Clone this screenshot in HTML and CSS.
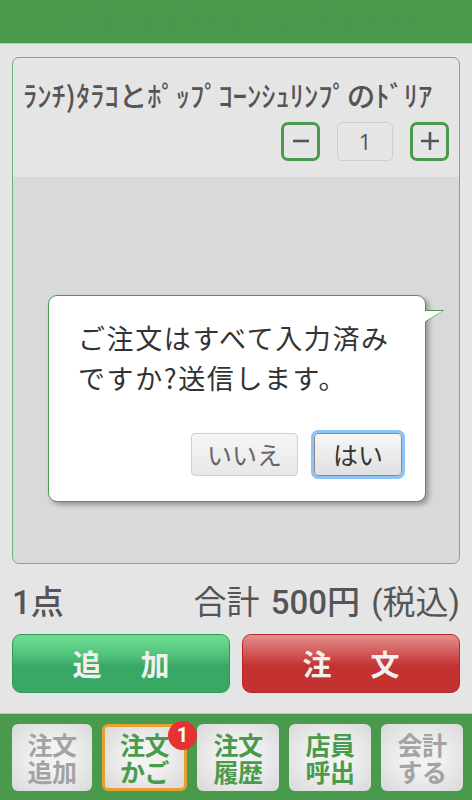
FILE: index.html
```html
<!DOCTYPE html>
<html lang="ja">
<head>
<meta charset="utf-8">
<link rel="stylesheet" href="styles.css">
</head>
<body>
<header class="topbar"><span class="topbar-title">ﾗﾝﾁ)ﾀﾗｺとﾎﾟｯﾌﾟｺｰﾝｼｭﾘﾝﾌﾟのﾄﾞﾘｱ</span></header>
<main class="content">
  <section class="card">
    <div class="card-head">
      <h1 class="item-name">ﾗﾝﾁ)ﾀﾗｺとﾎﾟｯﾌﾟｺｰﾝｼｭﾘﾝﾌﾟのﾄﾞﾘｱ</h1>
      <div class="stepper">
        <button class="step-btn"><svg viewBox="0 0 20 20" width="20" height="20"><path d="M2 10H18" stroke="#555" stroke-width="2.6"/></svg></button>
        <div class="qty">1</div>
        <button class="step-btn"><svg viewBox="0 0 20 20" width="20" height="20"><path d="M1 10H19M10 1V19" stroke="#555" stroke-width="2.6"/></svg></button>
      </div>
    </div>
    <div class="card-body"></div>
    <div class="dialog">
      <p class="dialog-msg">ご注文はすべて入力済み<br>ですか?送信します。</p>
      <div class="dialog-actions">
        <button class="dbtn">いいえ</button>
        <button class="dbtn dbtn-yes">はい</button>
      </div>
    </div>
  </section>
  <div class="totals">
    <span class="count">1点</span>
    <span class="sum">合計 <b>500円</b> (税込)</span>
  </div>
  <div class="actions">
    <button class="big big-green">追　加</button>
    <button class="big big-red">注　文</button>
  </div>
</main>
<footer class="tabbar">
  <div class="tab tab-off"><span class="tl">注文</span><span class="tl">追加</span></div>
  <div class="tab tab-on tab-sel"><span class="tl">注文</span><span class="tl">かご</span><span class="badge">1</span></div>
  <div class="tab tab-on"><span class="tl">注文</span><span class="tl">履歴</span></div>
  <div class="tab tab-on"><span class="tl">店員</span><span class="tl">呼出</span></div>
  <div class="tab tab-off"><span class="tl">会計</span><span class="tl">する</span></div>
</footer>
</body>
</html>
```
FILE: styles.css
```css
* { box-sizing: border-box; }
html, body { margin: 0; padding: 0; }
body {
  width: 472px;
  height: 800px;
  background: #e5e5e5;
  font-family: "Noto Sans CJK JP", "Noto Sans", sans-serif;
  color: #555;
  display: flex;
  flex-direction: column;
  overflow: hidden;
}
.topbar {
  height: 44px;
  background: #4a9a4e;
  border-bottom: 1px solid #b9d3b9;
  display: flex;
  align-items: center;
  justify-content: center;
}
.topbar-title {
  color: #48974c;
  font-size: 25px;
  font-weight: 500;
  white-space: nowrap;
}
.content {
  flex: 1;
  padding: 13px 12px 0;
  display: flex;
  flex-direction: column;
}
.card {
  position: relative;
  height: 507px;
  border: 1px solid #6ab56e;
  border-radius: 7px;
  background: #d9d9d9;
  display: flex;
  flex-direction: column;
}
.card-head {
  background: #e5e5e5;
  border-radius: 7px 7px 0 0;
  padding: 16px 12px 16px 10px;
}
.item-name {
  margin: 0;
  font-size: 28.5px;
  font-weight: 500;
  line-height: 42px;
  color: #555;
  white-space: nowrap;
  letter-spacing: 0;
}
.stepper {
  display: flex;
  justify-content: flex-end;
  gap: 17px;
  margin-top: 6px;
  margin-right: -2px;
}
.step-btn {
  width: 39px;
  height: 39px;
  border: 3px solid #4a9a4e;
  border-radius: 7px;
  background: #e6e6e6;
  padding: 0;
  display: flex;
  align-items: center;
  justify-content: center;
}
.qty {
  width: 56px;
  height: 39px;
  border: 1px solid #cfcfcf;
  border-radius: 5px;
  background: #e6e6e6;
  font-family: "Open Sans", sans-serif;
  font-size: 22px;
  color: #555;
  display: flex;
  align-items: center;
  justify-content: center;
}
.card-body { flex: 1; }
.dialog {
  position: absolute;
  left: 35px;
  top: 237px;
  width: 378px;
  height: 207px;
  background: #fff;
  border: 1.5px solid #4a9a4e;
  border-radius: 9px;
  box-shadow: 3px 3px 5px rgba(0,0,0,0.3);
  padding: 22px 10px 0 29px;
}
.dialog::after {
  content: "";
  position: absolute;
  right: -18px;
  top: 15px;
  width: 18px;
  height: 11px;
  background: #fff;
  clip-path: polygon(0 0, 100% 0, 0 100%);
}
.dialog::before {
  content: "";
  position: absolute;
  right: -20px;
  top: 14px;
  width: 20px;
  height: 13px;
  background: #4a9a4e;
  clip-path: polygon(0 0, 100% 0, 0 100%);
}
.dialog-msg {
  margin: 0;
  font-size: 27px;
  line-height: 40px;
  color: #333;
  letter-spacing: 1.6px;
  white-space: nowrap;
}
.dialog-actions {
  display: flex;
  justify-content: flex-end;
  align-items: center;
  gap: 16px;
  margin-top: 35px;
  margin-right: 13px;
}
.dbtn {
  height: 43px;
  padding: 0;
  border: 1px solid #d0d0d0;
  border-radius: 4px;
  background: linear-gradient(#f5f5f5, #e8e8e8);
  font-family: "Noto Sans CJK JP", sans-serif;
  font-size: 25px;
  line-height: 1;
  color: #666;
  width: 107px;
}
.dbtn-yes {
  width: 88px;
  color: #333;
  border: 1px solid #8a8a8a;
  box-shadow: 0 0 0 3px #8cc4f8;
  background: linear-gradient(#f7f7f7, #e0e0e0);
}
.totals {
  display: flex;
  justify-content: space-between;
  align-items: center;
  height: 70px;
  padding-top: 2px;
  font-size: 33px;
  color: #555;
  font-family: "Roboto", "Noto Sans CJK JP", sans-serif;
}
.count { font-weight: 500; }
.sum { word-spacing: 3px; }
.sum b { font-weight: 500; }
.actions {
  display: grid;
  grid-template-columns: 1fr 1fr;
  gap: 12px;
}
.big {
  height: 59px;
  border-radius: 9px;
  font-family: "Noto Sans CJK JP", sans-serif;
  font-size: 29px;
  font-weight: bold;
  color: #f0f0f0;
  letter-spacing: 5px;
  padding: 0 0 0 5px;
}
.big-green {
  border: 1px solid #2f9a55;
  background: linear-gradient(#6fdc95 0%, #52c27b 35%, #3aa865 55%, #3aa865 100%);
}
.big-red {
  border: 1px solid #b62727;
  background: linear-gradient(#e59090 0%, #cf5353 35%, #c33131 55%, #c33131 100%);
}
.tabbar {
  height: 88px;
  background: #4a9a4e;
  border-top: 1px solid #b0ccb0;
  display: grid;
  grid-template-columns: 80px 85px 82px 82px 82px;
  gap: 10px;
  padding: 10px 11px 9px 12px;
  margin-top: 20px;
}
.tab {
  position: relative;
  border-radius: 6px;
  background: radial-gradient(ellipse at center, #f2f2f2 30%, #d9d9d9 100%);
  font-size: 25px;
  font-weight: bold;
  text-align: center;
  display: flex;
  flex-direction: column;
  align-items: center;
  justify-content: center;
  padding-top: 1px;
}
.tl {
  display: block;
  height: 27px;
  line-height: 27px;
  letter-spacing: -0.5px;
}
.tab-off { color: #a3a3a3; }
.tab-on { color: #4a9a4e; }
.tab-sel { border: 3px solid #e8a030; }
.badge {
  position: absolute;
  top: -6px;
  right: -13px;
  width: 29px;
  height: 29px;
  border-radius: 50%;
  background: #e53333;
  color: #fff;
  font-family: "Roboto", sans-serif;
  font-size: 20px;
  font-weight: bold;
  line-height: 29px;
  text-align: center;
}
```
